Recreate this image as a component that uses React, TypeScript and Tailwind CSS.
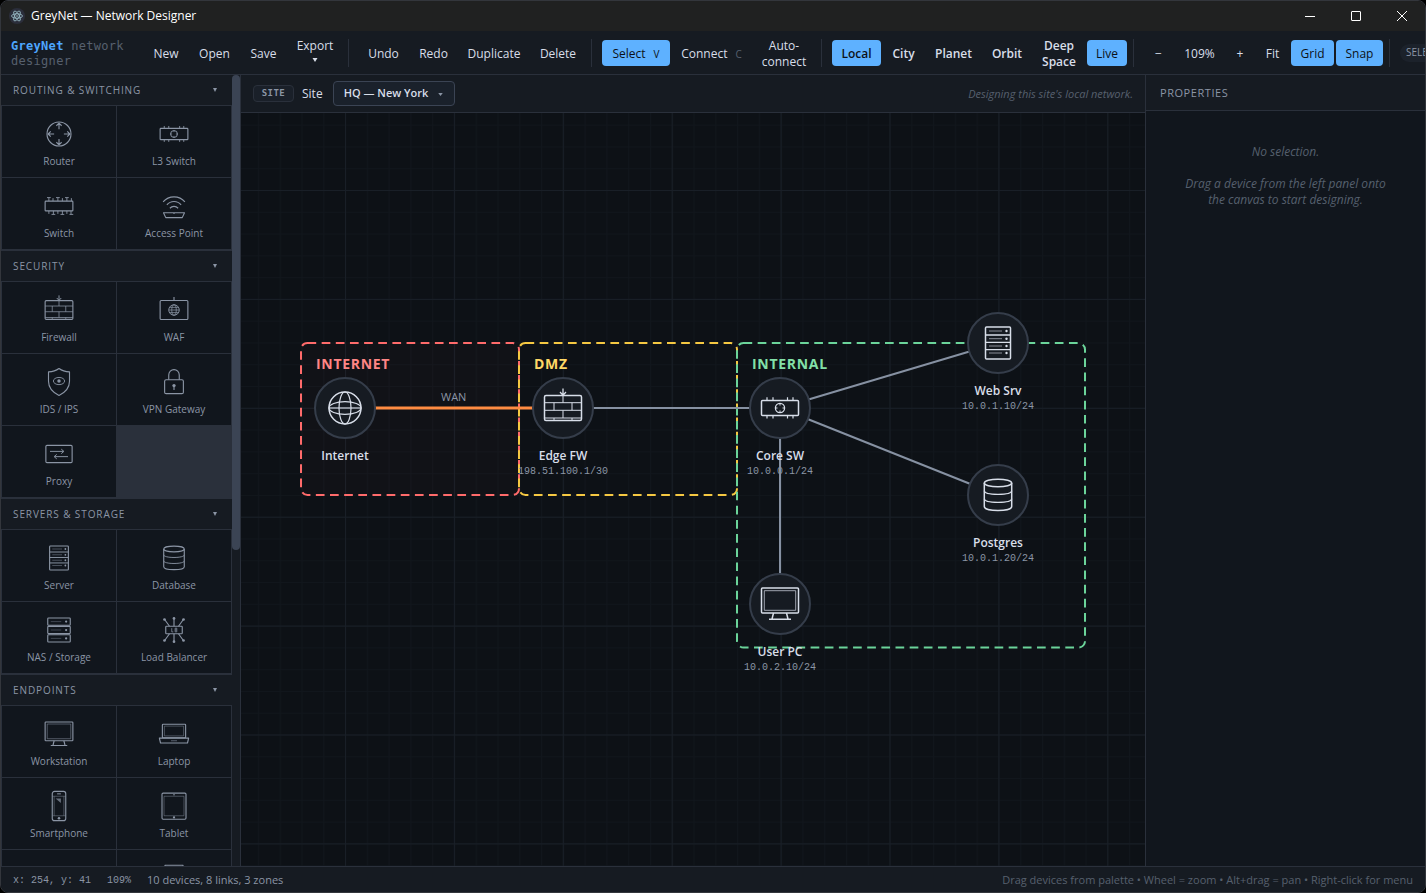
import type { ReactNode } from 'react'
import clsx from 'clsx'

const ICONS: Record<string, ReactNode> = {
  router: (
    <>
      <circle cx="24" cy="24" r="16" />
      <path d="M24 17.5V9.5M20.5 13l3.5-3.5 3.5 3.5M24 30.5v8M20.5 35l3.5 3.5 3.5-3.5M17.5 24h-8M13 20.5L9.5 24l3.5 3.5M30.5 24h8M35 20.5l3.5 3.5-3.5 3.5" />
    </>
  ),
  l3: (
    <>
      <rect x="5.5" y="16.5" width="37" height="15" rx="1" />
      <path d="M11 13.3v3M17 13.3v3M31.5 13.3v3M37 13.3v3M11 31.5v3M17 31.5v3M31.5 31.5v3M37 31.5v3" strokeWidth="1.2" />
      <circle cx="24" cy="24" r="4.6" strokeWidth="1.3" />
      <path d="M24 19.5v2M24 26.5v2M19.5 24h2M26.5 24h2" strokeWidth="1" />
    </>
  ),
  switch: (
    <>
      <rect x="5.5" y="17.5" width="37" height="13" rx="1" />
      <path d="M10.5 17.5V13M16 17.5v-4M22.5 17.5V13M28.5 17.5v-4M34.5 17.5V13M40.5 17.5v-4M8 12.8h5M20 12.8h5M32 12.8h5" strokeWidth="1.2" />
      <path d="M10.5 30.5v4M16.5 30.5V35M22.5 30.5v4M28.5 30.5V35M34.5 30.5v4M40 30.5V35M14 35.2h5M26 35.2h5M38 35.2h5" strokeWidth="1.2" />
    </>
  ),
  ap: (
    <>
      <path d="M9.5 18.5c7.500-9 21.500-9 29 0M14.5 22.500c5-6 14-6 19 0M18.500 27c3-3.300 8-3.300 11 0" />
      <path d="M10 33h28l-3 6.5H13zM24 32.5v2" />
    </>
  ),
  firewall: (
    <>
      <rect x="5.5" y="11.5" width="37" height="25" rx="1.5" />
      <path d="M5.5 18.7h37M5.5 26.3h37M5.5 34h37M24 11.5v7.2M15 18.7v7.6M33 18.7v7.6M24 26.3V34M15 34v2.5M33 34v2.5" strokeWidth="1" />
      <path d="M24 4.5V11M21 8l3 3.2L27 8" strokeWidth="1.3" />
    </>
  ),
  waf: (
    <>
      <rect x="5.5" y="11.3" width="37" height="25.4" rx="1.5" />
      <path d="M24 6.5v5" />
      <circle cx="24" cy="24" r="7" strokeWidth="1.2" />
      <ellipse cx="24" cy="24" rx="3" ry="7" strokeWidth="1" />
      <path d="M17 24h14M18 20.5h12M18 27.5h12" strokeWidth="1" />
    </>
  ),
  ids: (
    <>
      <path d="M24 6c4 3 9 4.300 14 4.500V23c0 9-6 15-14 19-8-4-14-10-14-19V10.500C15 10.300 20 9 24 6z" />
      <ellipse cx="24" cy="22.7" rx="7.5" ry="4.8" strokeWidth="1.2" />
      <circle cx="24" cy="22.7" r="2.3" fill="currentColor" stroke="none" />
    </>
  ),
  vpn: (
    <>
      <rect x="11.5" y="21" width="25" height="18.5" rx="2" />
      <path d="M17 21v-6.500a7 7 0 0 1 14 0V21M24 29v5.500" />
      <circle cx="24" cy="28.7" r="2.2" fill="currentColor" stroke="none" />
    </>
  ),
  proxy: (
    <>
      <rect x="6.5" y="12.5" width="35" height="23" rx="1.5" />
      <path d="M12 20.5h18M27 17.5l3.5 3-3.5 3M36 27.5H18M21 24.5l-3.5 3 3.5 3" strokeWidth="1.3" />
    </>
  ),
  server: (
    <>
      <rect x="11.5" y="8" width="25" height="32" rx="1" />
      <path d="M11.5 16h25M11.5 23.3h25M11.5 30.6h25" strokeWidth="1.3" />
      <path d="M15 12h13M15 19.7h13M15 27h13M15 34h13" strokeWidth="1" opacity="0.6" />
      <g fill="currentColor" stroke="none">
        <circle cx="32.5" cy="12" r="1.2" />
        <circle cx="32.5" cy="19.7" r="1.2" />
        <circle cx="32.5" cy="27" r="1.2" />
        <circle cx="32.5" cy="34" r="1.2" />
      </g>
    </>
  ),
  database: (
    <>
      <ellipse cx="24" cy="12" rx="13.7" ry="3.8" />
      <path d="M10.3 12v23.5c0 2.5 6 4 13.7 4s13.7-1.5 13.7-4V12" />
      <path d="M10.3 19.7c0 2.3 6 3.6 13.7 3.6s13.7-1.3 13.7-3.6M10.3 27.7c0 2.3 6 3.6 13.7 3.6s13.7-1.3 13.7-3.6" strokeWidth="1.2" />
    </>
  ),
  nas: (
    <>
      <rect x="9" y="8" width="30" height="9.6" rx="1" />
      <rect x="9" y="19.2" width="30" height="9.6" rx="1" />
      <rect x="9" y="30.4" width="30" height="9.6" rx="1" />
      <path d="M13 12.8h14M13 24h14M13 35.2h14" strokeWidth="1" opacity="0.5" />
      <g fill="currentColor" stroke="none">
        <circle cx="33.5" cy="12.8" r="1.5" />
        <circle cx="33.5" cy="24" r="1.5" />
        <circle cx="33.5" cy="35.2" r="1.5" />
      </g>
    </>
  ),
  lb: (
    <>
      <rect x="13" y="19" width="22" height="10" rx="1" />
      <path d="M24 19V9M24 29v10M18 19l-6.5-9M30 19l6.5-9M18 29l-6.5 9M30 29l6.5 9" />
      <path d="M21 21.5v5h2M25.5 21.5h2.2v5h-2.2zM25.5 24h2" strokeWidth="1" />
      <g fill="currentColor" stroke="none">
        <circle cx="24" cy="8.5" r="1.8" />
        <circle cx="24" cy="39.5" r="1.8" />
        <circle cx="11.3" cy="10" r="1.8" />
        <circle cx="36.7" cy="10" r="1.8" />
        <circle cx="11.3" cy="38" r="1.8" />
        <circle cx="36.7" cy="38" r="1.8" />
      </g>
    </>
  ),
  monitor: (
    <>
      <rect x="5.5" y="8" width="37" height="25" rx="1" />
      <rect x="8.3" y="10.7" width="31.4" height="19.6" strokeWidth="1" opacity="0.7" />
      <path d="M17.5 33L16 39M30.5 33l1.5 6M13 39.3h22" />
    </>
  ),
  laptop: (
    <>
      <rect x="8.5" y="11" width="31" height="18" rx="1" />
      <rect x="11.2" y="13.5" width="25.6" height="13" strokeWidth="1" opacity="0.6" />
      <path d="M4.5 29.5h39L42 36H6z" />
      <path d="M20 33h8" strokeWidth="1.3" opacity="0.6" />
    </>
  ),
  phone: (
    <>
      <rect x="15" y="4.5" width="18" height="39" rx="3" />
      <path d="M15 11h18M15 37h18M17.5 11v26M30.5 11v26" strokeWidth="1" opacity="0.6" />
      <path d="M21.5 7.8h5" strokeWidth="1.3" />
      <path d="M19.5 14h7v6z" fill="currentColor" stroke="none" opacity="0.7" />
      <circle cx="24" cy="40.3" r="1.7" fill="currentColor" stroke="none" />
    </>
  ),
  tablet: (
    <>
      <rect x="8" y="6.8" width="32" height="34.8" rx="1.5" />
      <rect x="10.7" y="11" width="26.6" height="26" strokeWidth="1" opacity="0.6" />
      <circle cx="24" cy="9" r="1" fill="currentColor" stroke="none" />
      <circle cx="24" cy="39.3" r="1.5" fill="currentColor" stroke="none" />
    </>
  ),
  globe: (
    <>
      <circle cx="24" cy="24" r="16" />
      <ellipse cx="24" cy="24" rx="6" ry="16" strokeWidth="1.2" />
      <ellipse cx="24" cy="24" rx="16" ry="6.3" strokeWidth="1.2" />
      <path d="M8 24h32" strokeWidth="1.2" />
    </>
  ),
  printer: <path d="M12 14V7h24v7M8 14h32v16H8z" />,
}

function DeviceIcon({ name, className }: { name: string; className: string }) {
  return (
    <svg viewBox="0 0 48 48" fill="none" stroke="currentColor" strokeWidth="1.5" strokeLinejoin="round" className={className} aria-hidden="true">
      {ICONS[name]}
    </svg>
  )
}

const SECTIONS = [
  {
    title: 'Routing & Switching',
    items: [
      ['router', 'Router'],
      ['l3', 'L3 Switch'],
      ['switch', 'Switch'],
      ['ap', 'Access Point'],
    ],
  },
  {
    title: 'Security',
    items: [
      ['firewall', 'Firewall'],
      ['waf', 'WAF'],
      ['ids', 'IDS / IPS'],
      ['vpn', 'VPN Gateway'],
      ['proxy', 'Proxy'],
    ],
  },
  {
    title: 'Servers & Storage',
    items: [
      ['server', 'Server'],
      ['database', 'Database'],
      ['nas', 'NAS / Storage'],
      ['lb', 'Load Balancer'],
    ],
  },
  {
    title: 'Endpoints',
    items: [
      ['monitor', 'Workstation'],
      ['laptop', 'Laptop'],
      ['phone', 'Smartphone'],
      ['tablet', 'Tablet'],
      ['', ''],
      ['printer', ''],
    ],
  },
]

const NODES = [
  { icon: 'globe', name: 'Internet', ip: '', pos: 'left-[104px] top-[295px]' },
  { icon: 'firewall', name: 'Edge FW', ip: '198.51.100.1/30', pos: 'left-[322px] top-[295px]' },
  { icon: 'l3', name: 'Core SW', ip: '10.0.0.1/24', pos: 'left-[539px] top-[295px]' },
  { icon: 'server', name: 'Web Srv', ip: '10.0.1.10/24', pos: 'left-[757px] top-[230px]' },
  { icon: 'database', name: 'Postgres', ip: '10.0.1.20/24', pos: 'left-[757px] top-[382px]' },
  { icon: 'monitor', name: 'User PC', ip: '10.0.2.10/24', pos: 'left-[539px] top-[491px]' },
]

type ToolProps = { children: ReactNode; width: string; active?: boolean; bold?: boolean }

function Tool({ children, width, active, bold }: ToolProps) {
  return (
    <button
      type="button"
      className={clsx(
        'flex min-h-[26px] shrink-0 items-center justify-center rounded pt-0.5 text-center text-xs leading-4',
        width,
        active ? 'bg-[#5eb1ff] text-[#0d1117]' : 'text-[#d8dee9]',
        bold && 'font-semibold'
      )}
    >
      {children}
    </button>
  )
}

function Separator() {
  return <span className="ml-1 mr-2 h-7 w-px shrink-0 bg-[#2a303b]" />
}

function TitleBar() {
  return (
    <header className="flex h-[30px] shrink-0 items-center bg-[#202121] pl-2 text-white">
      <svg viewBox="0 0 16 16" className="size-4" fill="none" stroke="#9fc3cf" strokeWidth="0.8" aria-hidden="true">
        <circle cx="8" cy="8" r="8" fill="#2b2e3b" stroke="none" />
        <ellipse cx="8" cy="8" rx="5.5" ry="2.2" />
        <ellipse cx="8" cy="8" rx="5.5" ry="2.2" transform="rotate(60 8 8)" />
        <ellipse cx="8" cy="8" rx="5.5" ry="2.2" transform="rotate(120 8 8)" />
        <circle cx="8" cy="8" r="0.8" fill="#9fc3cf" stroke="none" />
      </svg>
      <h1 className="ml-1.5 text-xs">GreyNet — Network Designer</h1>
      <div className="ml-auto flex h-full">
        <button type="button" aria-label="Minimize" className="flex w-[46px] items-center justify-center">
          <svg viewBox="0 0 10 10" className="size-2.5" stroke="white"><path d="M0 5.5h10" /></svg>
        </button>
        <button type="button" aria-label="Maximize" className="flex w-[46px] items-center justify-center">
          <svg viewBox="0 0 10 10" className="size-2.5" stroke="white" fill="none"><rect x="0.5" y="0.5" width="9" height="9" rx="0.5" /></svg>
        </button>
        <button type="button" aria-label="Close" className="flex w-[46px] items-center justify-center">
          <svg viewBox="0 0 10 10" className="size-2.5" stroke="white"><path d="M0 0l10 10M10 0L0 10" /></svg>
        </button>
      </div>
    </header>
  )
}

function Toolbar() {
  return (
    <nav className="flex h-11 shrink-0 items-center gap-0.5 overflow-hidden border-b border-[#2a303b] bg-[#161b22] pl-2.5">
      <div className="w-[131px] shrink-0 pt-0.5 font-['DejaVu_Sans_Mono',monospace] text-xs leading-[15px] tracking-wide text-[#56606e]">
        <span className="font-bold text-[#4da6ff]">GreyNet</span> <span>network</span>
        <div>designer</div>
      </div>
      <Tool width="w-11">New</Tool>
      <Tool width="w-[49px]">Open</Tool>
      <Tool width="w-[45px]">Save</Tool>
      <Tool width="w-[54px]">
        <span>
          Export
          <svg viewBox="0 0 6 4" className="mx-auto mb-2 mt-1 h-1 w-1.5" fill="currentColor"><path d="M0.5 0h5L3 4z" /></svg>
        </span>
      </Tool>
      <Separator />
      <Tool width="w-[49px]">Undo</Tool>
      <Tool width="w-[47px]">Redo</Tool>
      <Tool width="w-[70px]">Duplicate</Tool>
      <Tool width="w-[54px]">Delete</Tool>
      <Separator />
      <Tool width="w-[68px]" active>
        Select<kbd className="ml-2 font-[inherit] text-[10px]">V</kbd>
      </Tool>
      <Tool width="w-[79px]">
        Connect<kbd className="ml-2 font-[inherit] text-[10px] text-[#56606e]">C</kbd>
      </Tool>
      <Tool width="w-[62px]">Auto-<br />connect</Tool>
      <Separator />
      <Tool width="w-[49px]" active bold>Local</Tool>
      <Tool width="w-[41px]" bold>City</Tool>
      <Tool width="w-[55px]" bold>Planet</Tool>
      <Tool width="w-[48px]" bold>Orbit</Tool>
      <Tool width="w-[52px]" bold>Deep<br />Space</Tool>
      <Tool width="w-10" active>Live</Tool>
      <Separator />
      <Tool width="w-[29px]">−</Tool>
      <Tool width="w-[49px]">109%</Tool>
      <Tool width="w-[28px]">+</Tool>
      <Tool width="w-[33px]">Fit</Tool>
      <Tool width="w-[43px]" active>Grid</Tool>
      <Tool width="w-[47px]" active>Snap</Tool>
      <Separator />
      <span className="flex h-[18px] shrink-0 items-center rounded-full bg-[#1c222b] px-1.5 text-[10px] text-[#8b95a5]">SELECT</span>
    </nav>
  )
}

function Palette() {
  return (
    <aside className="flex w-60 shrink-0 overflow-hidden border-r border-[#2a303b] bg-[#161b22]">
      <div className="flex-1">
        {SECTIONS.map((section) => (
          <section key={section.title} className="border-b border-[#2a303b]">
            <h2 className="border-b border-[#2a303b] text-[10px] text-[#8b95a5]">
              <button type="button" className="flex h-[30px] w-full items-center justify-between px-3 uppercase tracking-[0.09em]">
                {section.title}
                <svg viewBox="0 0 6 4" className="mr-0.5 h-1 w-1.5" fill="currentColor"><path d="M1 0h4L3 4z" /></svg>
              </button>
            </h2>
            <div className="grid grid-cols-2 gap-px border-x border-b border-[#2a303b] bg-[#2a303b]">
              {section.items.map(([icon, label], i) => (
                <div key={i} className="flex h-[71px] flex-col items-center bg-[#11161d] pt-2.5 text-[#8b95a5]">
                  <DeviceIcon name={icon} className="size-9" />
                  <span className="mt-0.5 text-[10px] leading-[14px]">{label}</span>
                </div>
              ))}
            </div>
          </section>
        ))}
      </div>
      <div className="w-2 shrink-0">
        <div className="h-[60%] rounded bg-[#3b4454]" />
      </div>
    </aside>
  )
}

function Canvas() {
  return (
    <div className="relative flex-1 overflow-hidden bg-[#0d1116]">
      <svg className="absolute inset-0 h-full w-full" aria-hidden="true">
        <defs>
          <pattern id="minor" x="104" y="77" width="21.78" height="21.78" patternUnits="userSpaceOnUse">
            <path d="M0 0.5H22M0.5 0V22" stroke="#11161c" />
          </pattern>
          <pattern id="major" x="104" y="77" width="108.9" height="108.9" patternUnits="userSpaceOnUse">
            <path d="M0 0.5H109M0.5 0V109" stroke="#191f27" />
          </pattern>
        </defs>
        <rect width="100%" height="100%" fill="url(#minor)" />
        <rect width="100%" height="100%" fill="url(#major)" />
        <g strokeWidth="2" strokeDasharray="8.7 5.45" fillOpacity="0.02">
          <rect x="60" y="230" width="218" height="152" rx="6.5" stroke="#ff6b6b" fill="#ff6b6b" />
          <rect x="278" y="230" width="218" height="152" rx="6.5" stroke="#f5c842" fill="none" />
          <rect x="496" y="230" width="348" height="304.5" rx="6.5" stroke="#6bd49a" fill="none" />
        </g>
        <g stroke="#8691a2" strokeWidth="2">
          <path d="M322 295H539M539 295L757 230M539 295L757 382M539 295V491" />
          <path d="M104 295H322" stroke="#ff8c42" strokeWidth="3" />
        </g>
      </svg>
      <span className="absolute left-[75px] top-[241px] text-sm font-bold leading-5 tracking-wider text-[#ff8585]">INTERNET</span>
      <span className="absolute left-[293px] top-[241px] text-sm font-bold leading-5 tracking-wider text-[#ffd866]">DMZ</span>
      <span className="absolute left-[511px] top-[241px] text-sm font-bold leading-5 tracking-wider text-[#82e0a8]">INTERNAL</span>
      <span className="absolute left-[200px] top-[276px] text-[11px] leading-4 text-[#8b95a5]">WAN</span>
      {NODES.map((node) => (
        <div key={node.name} className={clsx('absolute flex w-[120px] -translate-x-1/2 flex-col items-center', node.pos)}>
          <div className="-mt-[31px] flex size-[62px] shrink-0 items-center justify-center rounded-full border-2 border-[#353d4a] bg-[#161b22] text-[#d8dee9]">
            <DeviceIcon name={node.icon} className="size-12 shrink-0" />
          </div>
          <span className="mt-2 text-xs font-semibold leading-[18px] text-[#d8dee9]">{node.name}</span>
          <span className="font-['Liberation_Mono',monospace] text-[10px] leading-[14px] text-[#8b95a5]">{node.ip}</span>
        </div>
      ))}
    </div>
  )
}

export default function App() {
  return (
    <div className="h-screen bg-black font-['Open_Sans',sans-serif]">
      <div className="flex h-full flex-col overflow-hidden rounded-lg border border-[#33363c] bg-[#0d1116]">
        <TitleBar />
        <Toolbar />
        <div className="flex min-h-0 flex-1">
          <Palette />
          <main className="flex min-w-0 flex-1 flex-col">
            <div className="flex h-[38px] shrink-0 items-center border-b border-[#2a303b] bg-[#161b22] px-3">
              <span className="flex h-[17px] w-[41px] items-center justify-center rounded-sm border border-[#2a303b] bg-[#1a2029] font-['DejaVu_Sans_Mono',monospace] text-[9px] font-bold tracking-wider text-[#8b95a5]">
                SITE
              </span>
              <label htmlFor="site" className="ml-2 text-xs text-[#d8dee9]">Site</label>
              <span className="relative ml-2.5">
                <select id="site" className="block h-[25px] w-[122px] appearance-none rounded border border-[#3b4454] bg-[#1a212b] pl-2.5 text-[11px] font-semibold text-[#d8dee9]">
                  <option>HQ — New York</option>
                </select>
                <svg viewBox="0 0 6 4" className="absolute right-3 top-3 h-[3px] w-[5px] text-[#8b95a5]" fill="currentColor"><path d="M0 0h6L3 4z" /></svg>
              </span>
              <span className="ml-auto pt-0.5 text-[11px] italic text-[#56606e]">Designing this site's local network.</span>
            </div>
            <Canvas />
          </main>
          <aside className="w-[280px] shrink-0 border-l border-[#2a303b] bg-[#11161d]">
            <h2 className="flex h-9 items-center border-b border-[#2a303b] bg-[#161b22] px-3.5 pt-0.5 text-[11px] tracking-wider text-[#8b95a5]">PROPERTIES</h2>
            <div className="px-9 pt-[33px] text-center text-xs italic leading-4 text-[#56606e]">
              <p>No selection.</p>
              <p className="mt-4">Drag a device from the left panel onto the canvas to start designing.</p>
            </div>
          </aside>
        </div>
        <footer className="flex h-[26px] shrink-0 items-center gap-4 border-t border-[#2a303b] bg-[#161b22] px-3 pt-0.5 text-[11px] text-[#8b95a5]">
          <span className="font-['Liberation_Mono',monospace] text-[10px]">x: 254, y: 41</span>
          <span className="font-['Liberation_Mono',monospace] text-[10px]">109%</span>
          <span>10 devices, 8 links, 3 zones</span>
          <span className="ml-auto text-[#56606e]">Drag devices from palette • Wheel = zoom • Alt+drag = pan • Right-click for menu</span>
        </footer>
      </div>
    </div>
  )
}
